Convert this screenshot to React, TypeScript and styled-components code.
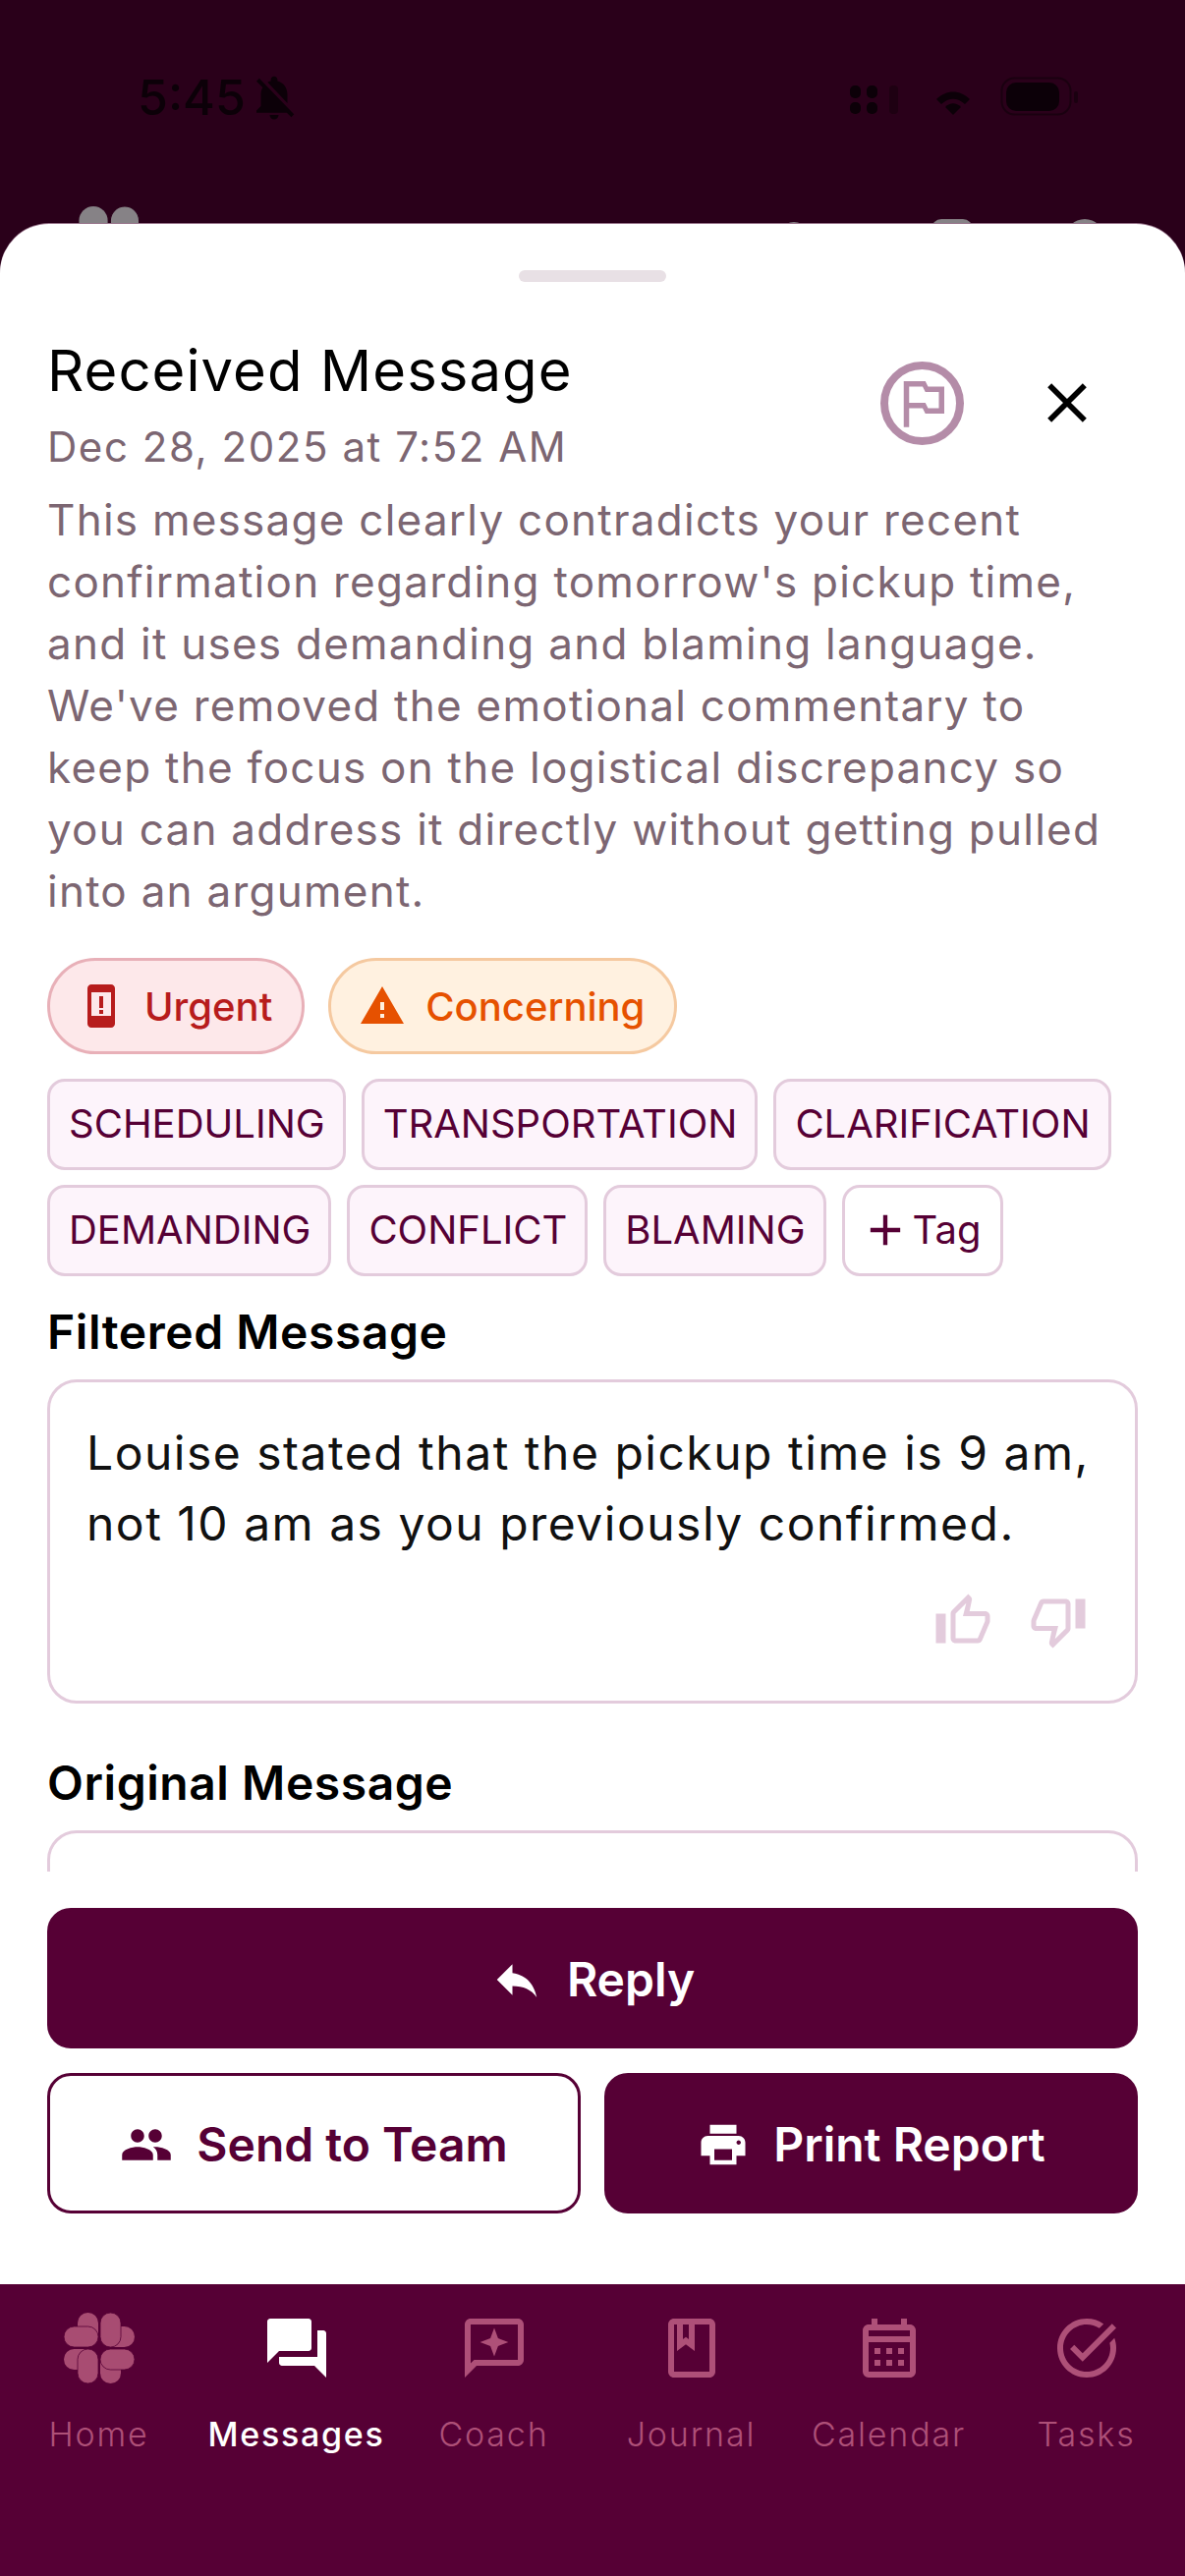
import React from "react";
import styled, { createGlobalStyle } from "styled-components";
import {
  MdAdd, MdClose, MdForum, MdOutlineBook, MdOutlineCalendarMonth, MdOutlineTaskAlt,
  MdOutlineThumbDown, MdOutlineThumbUp, MdOutlinedFlag, MdPeople, MdPrint, MdReply,
  MdWarning, MdNotificationsOff,
} from "react-icons/md";

const Global = createGlobalStyle`
  html, body { margin: 0; padding: 0; background: #560035; }
  * { box-sizing: border-box; }
  body { font-family: Inter, "Noto Sans", sans-serif; }
`;

const Screen = styled.div`
  width: 1206px; height: 2622px; display: flex; flex-direction: column; overflow: hidden; background: #2a001a;
`;
const Backdrop = styled.header`
  height: 228px; flex: none; background: #2a001a; overflow: hidden; display: flex; flex-direction: column;
`;
const StatusBar = styled.div`
  flex: none; height: 76px; margin-top: 61px; padding: 0 106px 0 140px; display: flex; align-items: center; justify-content: space-between; color: #0c0008;
`;
const Time = styled.div`
  display: flex; align-items: center; gap: 2px; font-size: 50px; font-weight: 500;
`;
const StatusIcons = styled.div`
  display: flex; align-items: center; gap: 31px;
`;
const Peek = styled.div`
  flex: none; margin-top: 73px; padding: 0 82px 0 61px; display: flex; align-items: flex-start; justify-content: space-between;
`;
const PeekRight = styled.div`
  display: flex; align-items: flex-start; padding-top: 13px;
`;
const PeekDot = styled.div<{ $w: number; $r: number; $left?: number; $top?: number }>`
  width: ${(p) => p.$w}px; height: 40px; border-radius: ${(p) => p.$r}px; background: #868286;
  margin-left: ${(p) => p.$left ?? 0}px; margin-top: ${(p) => p.$top ?? 0}px;
`;
const Sheet = styled.main`
  flex: none; height: 2097px; background: #fff; border-radius: 50px 50px 0 0; display: flex; flex-direction: column; padding: 0 48px;
  box-shadow: 0 -1px 0 #9c7a90;
`;
const Handle = styled.div`
  width: 150px; height: 12px; border-radius: 6px; background: #e8e0e5; margin: 47px auto 0; flex: none;
`;
const Scroll = styled.div`
  flex: none; height: 1618px; overflow: hidden; display: flex; flex-direction: column;
`;
const Head = styled.div`
  display: flex; justify-content: space-between; align-items: center; margin-top: 56px;
`;
const Title = styled.h1`
  margin: 0; font-size: 58px; line-height: 68px; font-weight: 400; color: #000; letter-spacing: 1.05px;
`;
const DateText = styled.div`
  margin-top: 16px; font-size: 42px; line-height: 56px; color: #7c6672; letter-spacing: 1.55px;
`;
const Actions = styled.div`
  display: flex; align-items: center; gap: 71px; padding-right: 38px; margin-top: -6px;
`;
const FlagButton = styled.div`
  width: 85px; height: 85px; border: 8px solid #b48ca8; border-radius: 50%; display: flex; align-items: center; justify-content: center; color: #b48ca8;
`;
const Summary = styled.p`
  margin: 15px 0 0; font-size: 44px; line-height: 63px; color: #7c6672; letter-spacing: 1.25px;
`;
const Pills = styled.div`
  display: flex; gap: 24px; margin-top: 36px;
`;
const Pill = styled.div<{ $bg: string; $border: string; $fg: string }>`
  height: 98px; border-radius: 49px; padding: 0 30px 0 28px; display: flex; align-items: center; gap: 20px;
  background: ${(p) => p.$bg}; border: 3px solid ${(p) => p.$border}; color: ${(p) => p.$fg};
  font-size: 40px; font-weight: 500;
`;
const Tags = styled.div`
  display: flex; flex-wrap: wrap; gap: 15px 16px; margin-top: 25px;
`;
const Tag = styled.div<{ $add?: boolean }>`
  height: 93px; border-radius: 18px; padding: 0 ${(p) => (p.$add ? "20px 2px 15px" : "18px 2px 19px")}; display: flex; align-items: center; gap: 2px;
  background: ${(p) => (p.$add ? "#fff" : "#fdf4fb")}; border: 3px solid #e3cbdc; color: #560035;
  font-size: 40px;
`;
const Label = styled.h2`
  margin: 28px 0 0; font-size: 48px; line-height: 58px; font-weight: 600; color: #000; letter-spacing: 0.55px;
`;
const MessageBox = styled.div`
  margin-top: 19px; flex: none; height: 330px; border: 3px solid #e3cbdc; border-radius: 30px; padding: 36px 37px 0; display: flex; flex-direction: column; background: #fff;
`;
const MessageText = styled.div`
  font-size: 48px; line-height: 72px; color: #111; letter-spacing: 1.5px;
`;
const Feedback = styled.div`
  display: flex; justify-content: flex-end; gap: 37px; color: #e3cbdc; margin-top: 33px; padding-right: 11px;
`;
const OriginalLabel = styled(Label)`
  margin-top: 52px;
`;
const ActionGroup = styled.div`
  margin-top: 37px; display: flex; flex-direction: column; gap: 25px;
`;
const Row = styled.div`
  display: grid; grid-template-columns: 1fr 1fr; gap: 24px;
`;
const Button = styled.div<{ $outline?: boolean }>`
  height: 143px; border-radius: 24px; padding-top: 2px; display: flex; align-items: center; justify-content: center; gap: 24px;
  background: ${(p) => (p.$outline ? "#fff" : "#560035")}; color: ${(p) => (p.$outline ? "#560035" : "#fff")};
  border: 3px solid #560035; font-size: 48px; font-weight: 600;
`;
const Nav = styled.nav`
  flex: 1; background: #560035; display: grid; grid-template-columns: repeat(6, 1fr); padding-top: 29px; align-items: start;
`;
const NavItem = styled.div<{ $active?: boolean }>`
  display: flex; flex-direction: column; align-items: center; gap: 30px; color: ${(p) => (p.$active ? "#fff" : "#ae5078")};
  font-size: 34px; line-height: 44px; letter-spacing: ${(p) => (p.$active ? "1.7px" : "1.85px")}; font-weight: ${(p) => (p.$active ? 500 : 300)};
`;

const Clover = ({ size = 72, color = "#a84c72", back = "#560035" }: { size?: number; color?: string; back?: string }) => (
  <svg width={size} height={size} viewBox="0 0 72 72">
    {[0, 90, 180, 270].map((r) => (
      <rect key={r} transform={`rotate(${r} 36 36)`} x="14" y="0" width="21" height="34" rx="10.5" fill={color} />
    ))}
    {[0, 90, 180, 270].map((r) => (
      <rect key={r} transform={`rotate(${r} 36 36)`} x="37" y="0" width="21" height="35" rx="10.5" fill={color} stroke={back} strokeWidth="0.8" />
    ))}
  </svg>
);
const UrgentIcon = () => (
  <svg width="48" height="48" viewBox="0 0 24 24" fill="currentColor">
    <path fillRule="evenodd" d="M17 1H7C5.9 1 5 1.9 5 3v18c0 1.1.9 2 2 2h10c1.1 0 2-.9 2-2V3c0-1.1-.9-2-2-2zM7 5v12h10V5H7z" />
    <path d="M11 7h2v6h-2zM11 14h2v2h-2z" />
  </svg>
);
const CoachIcon = () => (
  <svg width="72" height="72" viewBox="0 0 24 24" fill="currentColor">
    <path d="M20 2H4c-1.1 0-2 .9-2 2v18l4-4h14c1.1 0 2-.9 2-2V4c0-1.1-.9-2-2-2zm0 14H5.17L4 17.17V4h16v12z" />
    <path d="M12 5.2l1.3 3.5 3.5 1.3-3.5 1.3-1.3 3.5-1.3-3.5-3.5-1.3 3.5-1.3z" />
  </svg>
);
const Signal = () => (
  <svg width="57" height="40" viewBox="0 0 57 40" fill="currentColor">
    <rect x="0" y="8" width="11" height="13" rx="5" /><rect x="17" y="8" width="11" height="13" rx="5" />
    <rect x="0" y="25" width="11" height="12" rx="5" /><rect x="17" y="25" width="11" height="12" rx="5" />
    <rect x="40" y="8" width="9" height="29" rx="4" fill="#1e0012" />
  </svg>
);
const Wifi = () => (
  <svg width="34" height="36" viewBox="0 -12 34 36" fill="currentColor">
    <path d="M0 8C10-2 24-2 34 8l-5 5C21 6 13 6 5 13z" />
    <path d="M9 16c5-5 11-5 16 0l-8 8z" />
  </svg>
);
const Battery = () => (
  <svg width="82" height="44" viewBox="0 0 82 44" fill="currentColor">
    <rect x="1.5" y="2.5" width="70" height="37" rx="13" fill="none" stroke="#1a0010" strokeWidth="2" />
    <rect x="6" y="7" width="54" height="29" rx="10" />
    <rect x="75" y="16" width="4" height="12" rx="2" fill="#1a0010" />
  </svg>
);

const tags = ["SCHEDULING", "TRANSPORTATION", "CLARIFICATION", "DEMANDING", "CONFLICT", "BLAMING"];

export default function App() {
  return (
    <Screen>
      <Global />
      <Backdrop>
        <StatusBar>
          <Time>5:45<MdNotificationsOff size={54} /></Time>
          <StatusIcons><Signal /><Wifi /><Battery /></StatusIcons>
        </StatusBar>
        <Peek>
          <Clover size={100} color="#868286" back="#2a001a" />
          <PeekRight>
            <PeekDot $w={30} $r={15} $top={3} />
            <PeekDot $w={42} $r={10} $left={125} />
            <PeekDot $w={40} $r={20} $left={94} />
          </PeekRight>
        </Peek>
      </Backdrop>
      <Sheet>
        <Handle />
        <Scroll>
          <Head>
            <div>
              <Title>Received Message</Title>
              <DateText>Dec 28, 2025 at 7:52 AM</DateText>
            </div>
            <Actions>
              <FlagButton><MdOutlinedFlag size={66} /></FlagButton>
              <MdClose size={68} color="#000" />
            </Actions>
          </Head>
          <Summary>
            This message clearly contradicts your recent confirmation regarding tomorrow's pickup time, and it uses demanding and blaming language. We've removed the emotional commentary to keep the focus on the logistical discrepancy so you can address it directly without getting pulled into an argument.
          </Summary>
          <Pills>
            <Pill $bg="#fde8ea" $border="#e8b0b8" $fg="#b71c1c"><UrgentIcon />Urgent</Pill>
            <Pill $bg="#fff1e0" $border="#f5c9a0" $fg="#e65100"><MdWarning size={48} />Concerning</Pill>
          </Pills>
          <Tags>
            {tags.map((t) => <Tag key={t}>{t}</Tag>)}
            <Tag $add><MdAdd size={52} />Tag</Tag>
          </Tags>
          <Label>Filtered Message</Label>
          <MessageBox>
            <MessageText>Louise stated that the pickup time is 9 am, not 10 am as you previously confirmed.</MessageText>
            <Feedback><MdOutlineThumbUp size={60} /><MdOutlineThumbDown size={60} /></Feedback>
          </MessageBox>
          <OriginalLabel>Original Message</OriginalLabel>
          <MessageBox />
        </Scroll>
        <ActionGroup>
          <Button><MdReply size={54} />Reply</Button>
          <Row>
            <Button $outline><MdPeople size={54} />Send to Team</Button>
            <Button><MdPrint size={54} />Print Report</Button>
          </Row>
        </ActionGroup>
      </Sheet>
      <Nav>
        <NavItem><Clover />Home</NavItem>
        <NavItem $active><MdForum size={72} />Messages</NavItem>
        <NavItem><CoachIcon />Coach</NavItem>
        <NavItem><MdOutlineBook size={72} />Journal</NavItem>
        <NavItem><MdOutlineCalendarMonth size={72} />Calendar</NavItem>
        <NavItem><MdOutlineTaskAlt size={72} />Tasks</NavItem>
      </Nav>
    </Screen>
  );
}
